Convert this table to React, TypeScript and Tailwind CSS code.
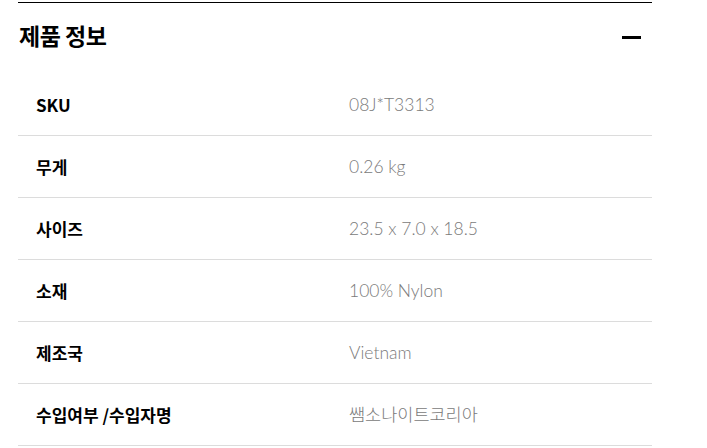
import React from "react";

const rows = [
  { label: "SKU", value: "08J*T3313" },
  { label: "무게", value: "0.26 kg" },
  { label: "사이즈", value: "23.5 x 7.0 x 18.5" },
  { label: "소재", value: "100% Nylon" },
  { label: "제조국", value: "Vietnam" },
  { label: "수입여부 /수입자명", value: "쌤소나이트코리아" },
];

const App = () => {
  return (
    <div className="w-[707px] h-[448px] overflow-hidden bg-white pt-[2px] font-['Noto_Sans_CJK_KR',sans-serif]">
      <div className="ml-[18px] w-[634px] border-t border-black">
        <div className="h-[71px] flex items-center justify-between pl-px pr-[11px] pb-[3px]">
          <h2 className="text-[23px] leading-none font-bold text-black tracking-[-0.5px] pb-[3px]">
            제품 정보
          </h2>
          <span className="block w-[19px] h-[3px] bg-black" />
        </div>

        {rows.map((row) => (
          <div
            key={row.label}
            className="h-[62px] flex items-center border-b border-[#dcdcdc]"
          >
            <div className="w-[331px] pl-[18px] text-[17px] leading-none font-bold text-black">
              {row.label}
            </div>
            <div className="text-[17.5px] leading-none font-light text-[#7a7a7a] font-['Lato','Noto_Sans_CJK_KR',sans-serif]">
              {row.value}
            </div>
          </div>
        ))}
      </div>
    </div>
  );
};

export default App;
